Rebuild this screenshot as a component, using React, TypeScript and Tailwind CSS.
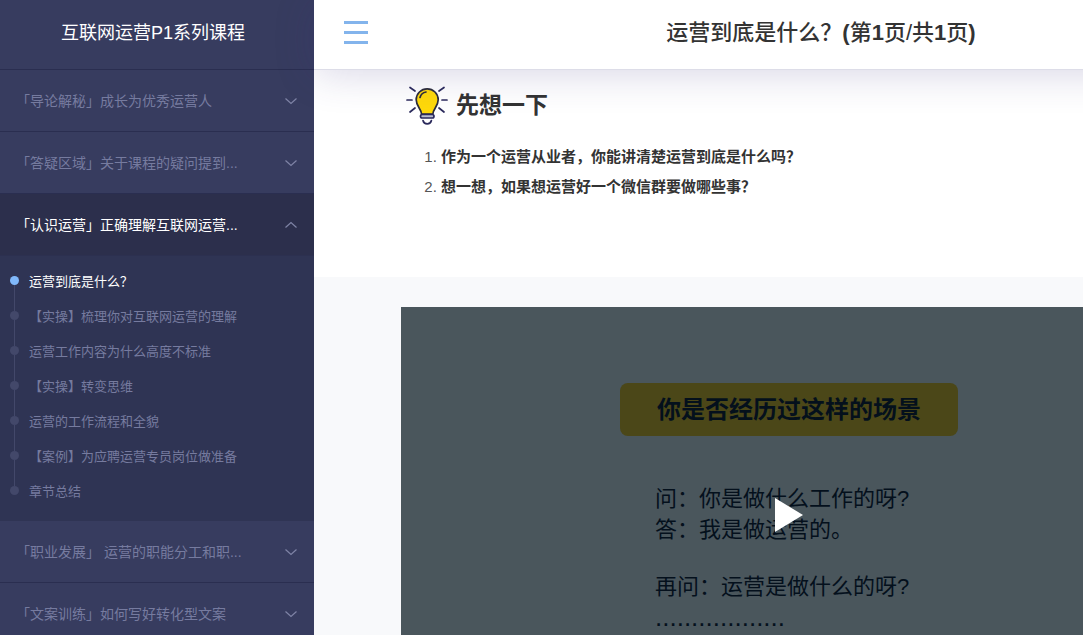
import React, { useState } from 'react';
import clsx from 'clsx';

interface Chapter {
  title: string;
  lessons: string[];
}

const chapters: Chapter[] = [
  { title: '「导论解秘」成长为优秀运营人', lessons: [] },
  { title: '「答疑区域」关于课程的疑问提到...', lessons: [] },
  {
    title: '「认识运营」正确理解互联网运营...',
    lessons: [
      '运营到底是什么？',
      '【实操】梳理你对互联网运营的理解',
      '运营工作内容为什么高度不标准',
      '【实操】转变思维',
      '运营的工作流程和全貌',
      '【案例】为应聘运营专员岗位做准备',
      '章节总结',
    ],
  },
  { title: '「职业发展」 运营的职能分工和职...', lessons: [] },
  { title: '「文案训练」如何写好转化型文案', lessons: [] },
];

const questions = [
  '作为一个运营从业者，你能讲清楚运营到底是什么吗？',
  '想一想，如果想运营好一个微信群要做哪些事？',
];

const Chevron = ({ open }: { open: boolean }) => (
  <svg viewBox="0 0 14 8" className="h-2 w-[14px] shrink-0" fill="none" stroke="#7f84a6" strokeWidth="1.2">
    <path d={open ? 'M1.500 6.500L7 1.500l5.500 5' : 'M1.500 1.500l5.500 5 5.500-5'} />
  </svg>
);

const Bulb = () => (
  <svg
    viewBox="0 0 42 40"
    className="h-10 w-[42px] shrink-0"
    fill="none"
    stroke="#2b2a5c"
    strokeWidth="1.7"
    strokeLinecap="round"
  >
    <path d="M4 2.500l5 3.500M1 15h5M4 27l5-4M38 2.500l-5 3.500M41 15h-5M38 27l-5-4" />
    <path
      d="M15.500 29c0-5-5.300-7.500-5.300-14.200a11 11 0 0 1 22 0c0 6.700-5.300 9.200-5.300 14.200z"
      fill="#ffd90a"
      stroke="#2c2c3c"
    />
    <path d="M14 12.500c.8-3 2.800-5 6-5.500" stroke="#2c2c3c" />
    <rect x="14.500" y="29.500" width="13.500" height="3.500" rx="1.700" fill="#b9bdd0" />
    <path d="M17 35.500c.5 2.200 2 3.300 4.200 3.300s3.700-1.100 4.200-3.300" />
  </svg>
);

const Sidebar = () => {
  const [openIndex, setOpenIndex] = useState(2);
  const [lesson, setLesson] = useState(0);
  return (
    <aside className="w-[314px] shrink-0 overflow-hidden bg-[#373c5f]">
      <h2 className="flex h-[70px] items-center justify-center border-b border-[#2a2e50] pb-1 pr-2 text-lg text-white">
        互联网运营P1系列课程
      </h2>
      {chapters.map((chapter, i) => {
        const open = i === openIndex;
        return (
          <div key={chapter.title}>
            <button
              type="button"
              onClick={() => setOpenIndex(open ? -1 : i)}
              className={clsx(
                'flex h-[62px] w-full items-center justify-between border-b px-4 text-left text-sm',
                open ? 'border-[#2c3050] bg-[#2c2f4c] text-white' : 'border-[#2a2e50] text-[#767b9f]'
              )}
            >
              <span>{chapter.title}</span>
              <Chevron open={open} />
            </button>
            {open && chapter.lessons.length > 0 && (
              <ul className="bg-[#2f3454] pb-3 pt-2">
                {chapter.lessons.map((name, j) => (
                  <li key={name} className="flex h-[35px] items-center pl-[10px]">
                    <span className="flex h-full w-[9px] flex-col items-center">
                      <span className={clsx('h-3 w-px', j > 0 && 'bg-[#43486a]')} />
                      <span
                        className={clsx(
                          'h-[9px] w-[9px] rounded-full',
                          j === lesson ? 'bg-[#80b8fb]' : 'bg-[#43486a]'
                        )}
                      />
                      <span
                        className={clsx('w-px flex-1', j < chapter.lessons.length - 1 && 'bg-[#43486a]')}
                      />
                    </span>
                    <a
                      href="#lesson"
                      onClick={() => setLesson(j)}
                      className={clsx('ml-[10px] text-[13px]', j === lesson ? 'text-white' : 'text-[#767b9f]')}
                    >
                      {name}
                    </a>
                  </li>
                ))}
              </ul>
            )}
          </div>
        );
      })}
    </aside>
  );
};

const Video = () => (
  <section className="relative mx-auto h-[437px] w-[776px] bg-[#4a565c] pt-[76px] text-[#04101c]">
    <h3 className="mx-auto flex h-[53px] w-[338px] items-center justify-center rounded-lg bg-[#4b4718] text-2xl font-bold">
      你是否经历过这样的场景
    </h3>
    <div className="ml-[254px] mt-[47px] text-[22px] leading-[31px]">
      <p>问：你是做什么工作的呀?</p>
      <p>答：我是做运营的。</p>
      <p className="mt-[26px]">再问：运营是做什么的呀?</p>
      <p className="text-[26px]">..................</p>
    </div>
    <button type="button" aria-label="播放" className="absolute left-[374px] top-[191px]">
      <svg viewBox="0 0 28 34" className="h-[34px] w-7" fill="#fff">
        <path d="M0 0l28 17L0 34z" />
      </svg>
    </button>
  </section>
);

const App = () => {
  return (
    <div className="flex h-screen overflow-hidden bg-[#f8f9fb] font-['Liberation_Sans','Noto_Sans_CJK_SC',sans-serif]">
      <Sidebar />
      <div className="min-w-[950px] flex-1">
        <header className="relative flex h-[70px] items-center border-b border-[#dddde8] bg-white pb-1 shadow-[0_4px_40px_rgba(60,50,130,0.2)]">
          <button type="button" aria-label="菜单" className="flex w-16 shrink-0 flex-col gap-[7px] pl-[30px]">
            <span className="h-[3px] w-6 bg-[#83b4ec]" />
            <span className="h-[3px] w-6 bg-[#83b4ec]" />
            <span className="h-[3px] w-6 bg-[#83b4ec]" />
          </button>
          <h1 className="flex-1 text-center text-[22px] font-medium text-[#333]">
            运营到底是什么？<b>(</b>第<b>1</b>页/共<b>1</b>页<b>)</b>
          </h1>
        </header>
        <main>
          <section className="bg-white pb-[75px] pt-[15px]">
            <div className="mx-auto w-[776px]">
              <h2 className="flex items-center gap-2 pl-[5px] text-[23px] font-bold text-[#333]">
                <Bulb />
                先想一下
              </h2>
              <ol className="mt-[17px] list-decimal pl-10 text-[15px] leading-[30px] text-[#555]">
                {questions.map((q) => (
                  <li key={q}>
                    <strong className="text-[#333]">{q}</strong>
                  </li>
                ))}
              </ol>
            </div>
          </section>
          <div className="pt-[30px]">
            <Video />
          </div>
        </main>
      </div>
    </div>
  );
};

export default App;
